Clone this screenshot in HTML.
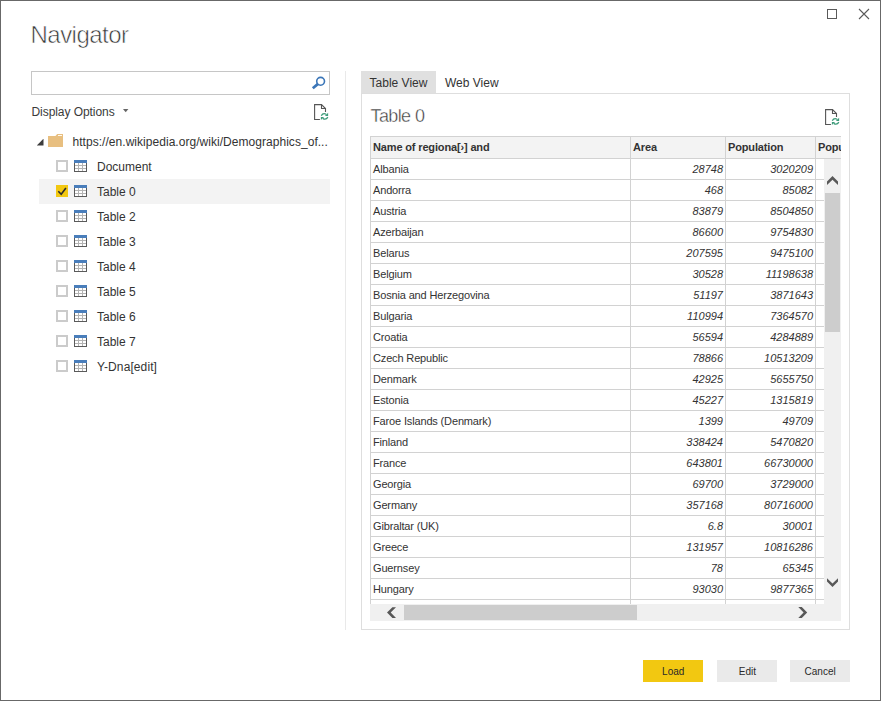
<!DOCTYPE html>
<html><head><meta charset="utf-8"><title>Navigator</title>
<style>
html,body{margin:0;padding:0;background:#fff;}
body{width:881px;height:701px;position:relative;overflow:hidden;font-family:"Liberation Sans",sans-serif;font-size:12px;color:#333;}
.win{position:absolute;left:0;top:0;width:879px;height:699px;border:1px solid #686868;background:#fff;}
.abs{position:absolute;white-space:nowrap;}
.title{left:30.5px;top:20px;font-size:24px;line-height:30px;color:#383838;letter-spacing:-0.52px;-webkit-text-stroke:0.6px #fff;paint-order:fill stroke;}
.search{left:31px;top:71px;width:297px;height:22px;border:1px solid #c6c6c6;background:#fff;}
.disp{left:31.5px;top:104px;letter-spacing:-0.06px;line-height:16px;color:#3a3a3a;}
.sep{left:345px;top:71px;width:1px;height:559px;background:#e9e9e9;}
.row{left:39px;width:291px;height:25px;}
.row.sel{background:#f3f3f3;}
.cb{position:absolute;left:17px;top:6px;width:8px;height:8px;border:2px solid #cbcbcb;background:#fff;}
.cb.on{background:#f2c811;border-color:#f2c811;}
.ticon{position:absolute;left:35px;top:6px;}
.rlabel{position:absolute;left:58px;top:5px;line-height:16px;color:#333;}
.tab{top:71px;height:22px;line-height:25px;font-size:12px;color:#333;}
.panel{left:361px;top:93px;width:487px;height:535px;border:1px solid #dedede;background:#fff;}
.h2{left:370.5px;top:104px;font-size:18px;line-height:24px;color:#383838;letter-spacing:-0.6px;-webkit-text-stroke:0.4px #fff;paint-order:fill stroke;}
.grid{left:370px;top:136px;width:471px;height:468px;overflow:hidden;background:#fff;}
.grid table{border-collapse:collapse;table-layout:fixed;width:560px;font-size:11px;letter-spacing:-0.15px;}
.grid td,.grid th{border:1px solid #d2d2d2;height:20px;padding:0 2px 0 2px;line-height:20px;overflow:hidden;white-space:nowrap;}
.grid th{background:#f3f3f3;text-align:left;font-weight:bold;height:21px;color:#333;line-height:20px;padding-bottom:1px;height:20px;}
.grid td.n{text-align:right;font-style:italic;padding-right:2px;letter-spacing:0;}
.btn{top:660px;width:60px;height:22px;line-height:23px;text-align:center;background:#eaeaea;color:#2a2a2a;font-size:11px;}
.btn span{display:inline-block;transform:scaleX(0.91);transform-origin:50% 50%;}
.btn.pri{background:#f2c811;}
.vtrack{left:824px;top:159px;width:17px;height:462px;background:#f0f0f0;}
.htrack{left:370px;top:604px;width:471px;height:17px;background:#f0f0f0;}
.thumb{background:#cdcdcd;}
</style></head><body>
<div class="win">

<div class="abs" style="left:-1px;top:-1px;width:881px;height:701px;">
<div class="abs title">Navigator</div>
<svg class="abs" style="left:826px;top:8px" width="12" height="12" viewBox="0 0 12 12" shape-rendering="crispEdges"><rect x="1.5" y="1.5" width="9" height="9" fill="none" stroke="#5a5a5a" stroke-width="1"/></svg>
<svg class="abs" style="left:858px;top:8px" width="12" height="12" viewBox="0 0 12 12"><path d="M1 1L11 11M11 1L1 11" fill="none" stroke="#5a5a5a" stroke-width="1.1"/></svg>
<div class="abs search"></div>
<svg class="abs" style="left:311px;top:75px" width="16" height="16" viewBox="0 0 16 16"><circle cx="9.6" cy="6.3" r="3.9" fill="none" stroke="#3b76b8" stroke-width="1.6"/><path d="M7.0 8.9L1.8 13.3" stroke="#3b76b8" stroke-width="2.7" stroke-linecap="butt" fill="none"/></svg>
<div class="abs disp">Display Options</div>
<svg class="abs" style="left:123px;top:109px" width="6" height="4" viewBox="0 0 6 4"><path d="M0 0H5.4L2.7 3.2Z" fill="#666"/></svg>
<div class="abs" style="left:314px;top:104px"><svg class="ficon" width="16" height="17" viewBox="0 0 16 17"><path d="M5.9 15.5H0.6V0.6H7.5L11.5 4.5V7.9" fill="none" stroke="#555" stroke-width="1.1"/><path d="M7.5 0.6V4.5H11.5" fill="none" stroke="#555" stroke-width="1.1"/><g fill="none" stroke="#3d9b7a" stroke-width="1.3"><path d="M7.3 11.8C8.1 10.1 9.7 9.5 11.1 9.8L12.4 10.5"/><path d="M13.8 13.1C13 14.8 11.4 15.4 10 15.1L8.7 14.4"/></g><path d="M14.1 8.7V11.9H10.9Z" fill="#3d9b7a"/><path d="M6.9 16.1V12.9H10.1Z" fill="#3d9b7a"/></svg></div>
<svg class="abs" style="left:37px;top:139px" width="7" height="7" viewBox="0 0 7 7"><path d="M6.5 -0.3V6.5H-0.3Z" fill="#3c3c3c"/></svg>
<svg class="abs" style="left:48px;top:134px" width="15" height="13" viewBox="0 0 15 13" shape-rendering="crispEdges"><rect x="0" y="2" width="15" height="11" fill="#e8bf80"/><path d="M7 2.5L9.2 0H15V3H7Z" fill="#e8bf80" shape-rendering="geometricPrecision"/><rect x="10" y="1" width="4" height="1" fill="#fffaf0"/></svg>
<div class="abs" style="left:72.5px;top:134px;line-height:16px;color:#333;letter-spacing:0.04px" id="root">https://en.wikipedia.org/wiki/Demographics_of...</div>
<div class="abs row" style="top:154px"><div class="cb"></div><svg class="ticon" width="13" height="12" viewBox="0 0 13 12" shape-rendering="crispEdges"><rect x="0" y="0" width="13" height="12" fill="#fff"/><rect x="0" y="0" width="13" height="3" fill="#4a7ebb"/><rect x="0" y="3" width="1" height="9" fill="#5a5a5a"/><rect x="12" y="3" width="1" height="9" fill="#5a5a5a"/><rect x="0" y="11" width="13" height="1" fill="#5a5a5a"/><rect x="4" y="3" width="1" height="8" fill="#b4b4b4"/><rect x="8" y="3" width="1" height="8" fill="#b4b4b4"/><rect x="1" y="5" width="11" height="1" fill="#b4b4b4"/><rect x="1" y="8" width="11" height="1" fill="#b4b4b4"/></svg><div class="rlabel">Document</div></div>
<div class="abs row sel" style="top:179px"><div class="cb on"><svg width="12" height="12" viewBox="0 0 12 12" style="position:absolute;left:-2px;top:-2px"><path d="M2.3 6.3L5.2 9.2L9.9 2.9" fill="none" stroke="#2b2b2b" stroke-width="1.6"/></svg></div><svg class="ticon" width="13" height="12" viewBox="0 0 13 12" shape-rendering="crispEdges"><rect x="0" y="0" width="13" height="12" fill="#fff"/><rect x="0" y="0" width="13" height="3" fill="#4a7ebb"/><rect x="0" y="3" width="1" height="9" fill="#5a5a5a"/><rect x="12" y="3" width="1" height="9" fill="#5a5a5a"/><rect x="0" y="11" width="13" height="1" fill="#5a5a5a"/><rect x="4" y="3" width="1" height="8" fill="#b4b4b4"/><rect x="8" y="3" width="1" height="8" fill="#b4b4b4"/><rect x="1" y="5" width="11" height="1" fill="#b4b4b4"/><rect x="1" y="8" width="11" height="1" fill="#b4b4b4"/></svg><div class="rlabel">Table 0</div></div>
<div class="abs row" style="top:204px"><div class="cb"></div><svg class="ticon" width="13" height="12" viewBox="0 0 13 12" shape-rendering="crispEdges"><rect x="0" y="0" width="13" height="12" fill="#fff"/><rect x="0" y="0" width="13" height="3" fill="#4a7ebb"/><rect x="0" y="3" width="1" height="9" fill="#5a5a5a"/><rect x="12" y="3" width="1" height="9" fill="#5a5a5a"/><rect x="0" y="11" width="13" height="1" fill="#5a5a5a"/><rect x="4" y="3" width="1" height="8" fill="#b4b4b4"/><rect x="8" y="3" width="1" height="8" fill="#b4b4b4"/><rect x="1" y="5" width="11" height="1" fill="#b4b4b4"/><rect x="1" y="8" width="11" height="1" fill="#b4b4b4"/></svg><div class="rlabel">Table 2</div></div>
<div class="abs row" style="top:229px"><div class="cb"></div><svg class="ticon" width="13" height="12" viewBox="0 0 13 12" shape-rendering="crispEdges"><rect x="0" y="0" width="13" height="12" fill="#fff"/><rect x="0" y="0" width="13" height="3" fill="#4a7ebb"/><rect x="0" y="3" width="1" height="9" fill="#5a5a5a"/><rect x="12" y="3" width="1" height="9" fill="#5a5a5a"/><rect x="0" y="11" width="13" height="1" fill="#5a5a5a"/><rect x="4" y="3" width="1" height="8" fill="#b4b4b4"/><rect x="8" y="3" width="1" height="8" fill="#b4b4b4"/><rect x="1" y="5" width="11" height="1" fill="#b4b4b4"/><rect x="1" y="8" width="11" height="1" fill="#b4b4b4"/></svg><div class="rlabel">Table 3</div></div>
<div class="abs row" style="top:254px"><div class="cb"></div><svg class="ticon" width="13" height="12" viewBox="0 0 13 12" shape-rendering="crispEdges"><rect x="0" y="0" width="13" height="12" fill="#fff"/><rect x="0" y="0" width="13" height="3" fill="#4a7ebb"/><rect x="0" y="3" width="1" height="9" fill="#5a5a5a"/><rect x="12" y="3" width="1" height="9" fill="#5a5a5a"/><rect x="0" y="11" width="13" height="1" fill="#5a5a5a"/><rect x="4" y="3" width="1" height="8" fill="#b4b4b4"/><rect x="8" y="3" width="1" height="8" fill="#b4b4b4"/><rect x="1" y="5" width="11" height="1" fill="#b4b4b4"/><rect x="1" y="8" width="11" height="1" fill="#b4b4b4"/></svg><div class="rlabel">Table 4</div></div>
<div class="abs row" style="top:279px"><div class="cb"></div><svg class="ticon" width="13" height="12" viewBox="0 0 13 12" shape-rendering="crispEdges"><rect x="0" y="0" width="13" height="12" fill="#fff"/><rect x="0" y="0" width="13" height="3" fill="#4a7ebb"/><rect x="0" y="3" width="1" height="9" fill="#5a5a5a"/><rect x="12" y="3" width="1" height="9" fill="#5a5a5a"/><rect x="0" y="11" width="13" height="1" fill="#5a5a5a"/><rect x="4" y="3" width="1" height="8" fill="#b4b4b4"/><rect x="8" y="3" width="1" height="8" fill="#b4b4b4"/><rect x="1" y="5" width="11" height="1" fill="#b4b4b4"/><rect x="1" y="8" width="11" height="1" fill="#b4b4b4"/></svg><div class="rlabel">Table 5</div></div>
<div class="abs row" style="top:304px"><div class="cb"></div><svg class="ticon" width="13" height="12" viewBox="0 0 13 12" shape-rendering="crispEdges"><rect x="0" y="0" width="13" height="12" fill="#fff"/><rect x="0" y="0" width="13" height="3" fill="#4a7ebb"/><rect x="0" y="3" width="1" height="9" fill="#5a5a5a"/><rect x="12" y="3" width="1" height="9" fill="#5a5a5a"/><rect x="0" y="11" width="13" height="1" fill="#5a5a5a"/><rect x="4" y="3" width="1" height="8" fill="#b4b4b4"/><rect x="8" y="3" width="1" height="8" fill="#b4b4b4"/><rect x="1" y="5" width="11" height="1" fill="#b4b4b4"/><rect x="1" y="8" width="11" height="1" fill="#b4b4b4"/></svg><div class="rlabel">Table 6</div></div>
<div class="abs row" style="top:329px"><div class="cb"></div><svg class="ticon" width="13" height="12" viewBox="0 0 13 12" shape-rendering="crispEdges"><rect x="0" y="0" width="13" height="12" fill="#fff"/><rect x="0" y="0" width="13" height="3" fill="#4a7ebb"/><rect x="0" y="3" width="1" height="9" fill="#5a5a5a"/><rect x="12" y="3" width="1" height="9" fill="#5a5a5a"/><rect x="0" y="11" width="13" height="1" fill="#5a5a5a"/><rect x="4" y="3" width="1" height="8" fill="#b4b4b4"/><rect x="8" y="3" width="1" height="8" fill="#b4b4b4"/><rect x="1" y="5" width="11" height="1" fill="#b4b4b4"/><rect x="1" y="8" width="11" height="1" fill="#b4b4b4"/></svg><div class="rlabel">Table 7</div></div>
<div class="abs row" style="top:354px"><div class="cb"></div><svg class="ticon" width="13" height="12" viewBox="0 0 13 12" shape-rendering="crispEdges"><rect x="0" y="0" width="13" height="12" fill="#fff"/><rect x="0" y="0" width="13" height="3" fill="#4a7ebb"/><rect x="0" y="3" width="1" height="9" fill="#5a5a5a"/><rect x="12" y="3" width="1" height="9" fill="#5a5a5a"/><rect x="0" y="11" width="13" height="1" fill="#5a5a5a"/><rect x="4" y="3" width="1" height="8" fill="#b4b4b4"/><rect x="8" y="3" width="1" height="8" fill="#b4b4b4"/><rect x="1" y="5" width="11" height="1" fill="#b4b4b4"/><rect x="1" y="8" width="11" height="1" fill="#b4b4b4"/></svg><div class="rlabel" style="letter-spacing:0.1px">Y-Dna[edit]</div></div>
<div class="abs sep"></div>
<div class="abs tab" style="left:361px;width:75px;background:#e0e0e0;text-align:center;">Table View</div>
<div class="abs tab" style="left:445px;">Web View</div>
<div class="abs panel"></div>
<div class="abs h2">Table 0</div>
<div class="abs" style="left:825px;top:109px"><svg class="ficon" width="16" height="17" viewBox="0 0 16 17"><path d="M5.9 15.5H0.6V0.6H7.5L11.5 4.5V7.9" fill="none" stroke="#555" stroke-width="1.1"/><path d="M7.5 0.6V4.5H11.5" fill="none" stroke="#555" stroke-width="1.1"/><g fill="none" stroke="#3d9b7a" stroke-width="1.3"><path d="M7.3 11.8C8.1 10.1 9.7 9.5 11.1 9.8L12.4 10.5"/><path d="M13.8 13.1C13 14.8 11.4 15.4 10 15.1L8.7 14.4"/></g><path d="M14.1 8.7V11.9H10.9Z" fill="#3d9b7a"/><path d="M6.9 16.1V12.9H10.1Z" fill="#3d9b7a"/></svg></div>
<div class="abs grid"><table><colgroup><col style="width:260px"><col style="width:95px"><col style="width:90px"><col style="width:114px"></colgroup><tr><th>Name of regiona[›] and</th><th>Area</th><th>Population</th><th>Population density</th></tr><tr><td>Albania</td><td class="n">28748</td><td class="n">3020209</td><td class="n"></td></tr><tr><td>Andorra</td><td class="n">468</td><td class="n">85082</td><td class="n"></td></tr><tr><td>Austria</td><td class="n">83879</td><td class="n">8504850</td><td class="n"></td></tr><tr><td>Azerbaijan</td><td class="n">86600</td><td class="n">9754830</td><td class="n"></td></tr><tr><td>Belarus</td><td class="n">207595</td><td class="n">9475100</td><td class="n"></td></tr><tr><td>Belgium</td><td class="n">30528</td><td class="n">11198638</td><td class="n"></td></tr><tr><td>Bosnia and Herzegovina</td><td class="n">51197</td><td class="n">3871643</td><td class="n"></td></tr><tr><td>Bulgaria</td><td class="n">110994</td><td class="n">7364570</td><td class="n"></td></tr><tr><td>Croatia</td><td class="n">56594</td><td class="n">4284889</td><td class="n"></td></tr><tr><td>Czech Republic</td><td class="n">78866</td><td class="n">10513209</td><td class="n"></td></tr><tr><td>Denmark</td><td class="n">42925</td><td class="n">5655750</td><td class="n"></td></tr><tr><td>Estonia</td><td class="n">45227</td><td class="n">1315819</td><td class="n"></td></tr><tr><td>Faroe Islands (Denmark)</td><td class="n">1399</td><td class="n">49709</td><td class="n"></td></tr><tr><td>Finland</td><td class="n">338424</td><td class="n">5470820</td><td class="n"></td></tr><tr><td>France</td><td class="n">643801</td><td class="n">66730000</td><td class="n"></td></tr><tr><td>Georgia</td><td class="n">69700</td><td class="n">3729000</td><td class="n"></td></tr><tr><td>Germany</td><td class="n">357168</td><td class="n">80716000</td><td class="n"></td></tr><tr><td>Gibraltar (UK)</td><td class="n">6.8</td><td class="n">30001</td><td class="n"></td></tr><tr><td>Greece</td><td class="n">131957</td><td class="n">10816286</td><td class="n"></td></tr><tr><td>Guernsey</td><td class="n">78</td><td class="n">65345</td><td class="n"></td></tr><tr><td>Hungary</td><td class="n">93030</td><td class="n">9877365</td><td class="n"></td></tr><tr><td></td><td class="n"></td><td class="n"></td><td class="n"></td></tr></table></div>
<div class="abs vtrack"></div><div class="abs thumb" style="left:825px;top:193px;width:15px;height:139px"></div>
<div class="abs htrack"></div><div class="abs thumb" style="left:404px;top:605px;width:233px;height:15px"></div>
<svg class="abs" style="left:826px;top:175px" width="14" height="12" viewBox="0 0 14 12"><polygon points="6.5,1.0 12.0,6.4 12.0,10.0 6.5,4.7 1.0,10.0 1.0,6.4" fill="#585858"/></svg>
<svg class="abs" style="left:826px;top:577px" width="14" height="12" viewBox="0 0 14 12"><polygon points="6.5,10.0 12.0,4.6 12.0,1.2 6.5,6.4 1.0,1.2 1.0,4.6" fill="#585858"/></svg>
<svg class="abs" style="left:386px;top:606px" width="12" height="14" viewBox="0 0 12 14"><polygon points="1.0,6.6 6.4,1.2 10.0,1.2 4.7,6.6 10.0,12.0 6.4,12.0" fill="#585858"/></svg>
<svg class="abs" style="left:797px;top:606px" width="12" height="14" viewBox="0 0 12 14"><polygon points="10.2,6.5 4.8,1.1 1.3,1.1 6.6,6.5 1.3,12.0 4.8,12.0" fill="#585858"/></svg>
<div class="abs btn pri" style="left:643px"><span>Load</span></div>
<div class="abs btn" style="left:717px"><span>Edit</span></div>
<div class="abs btn" style="left:790px"><span>Cancel</span></div>
</div></div></body></html>
